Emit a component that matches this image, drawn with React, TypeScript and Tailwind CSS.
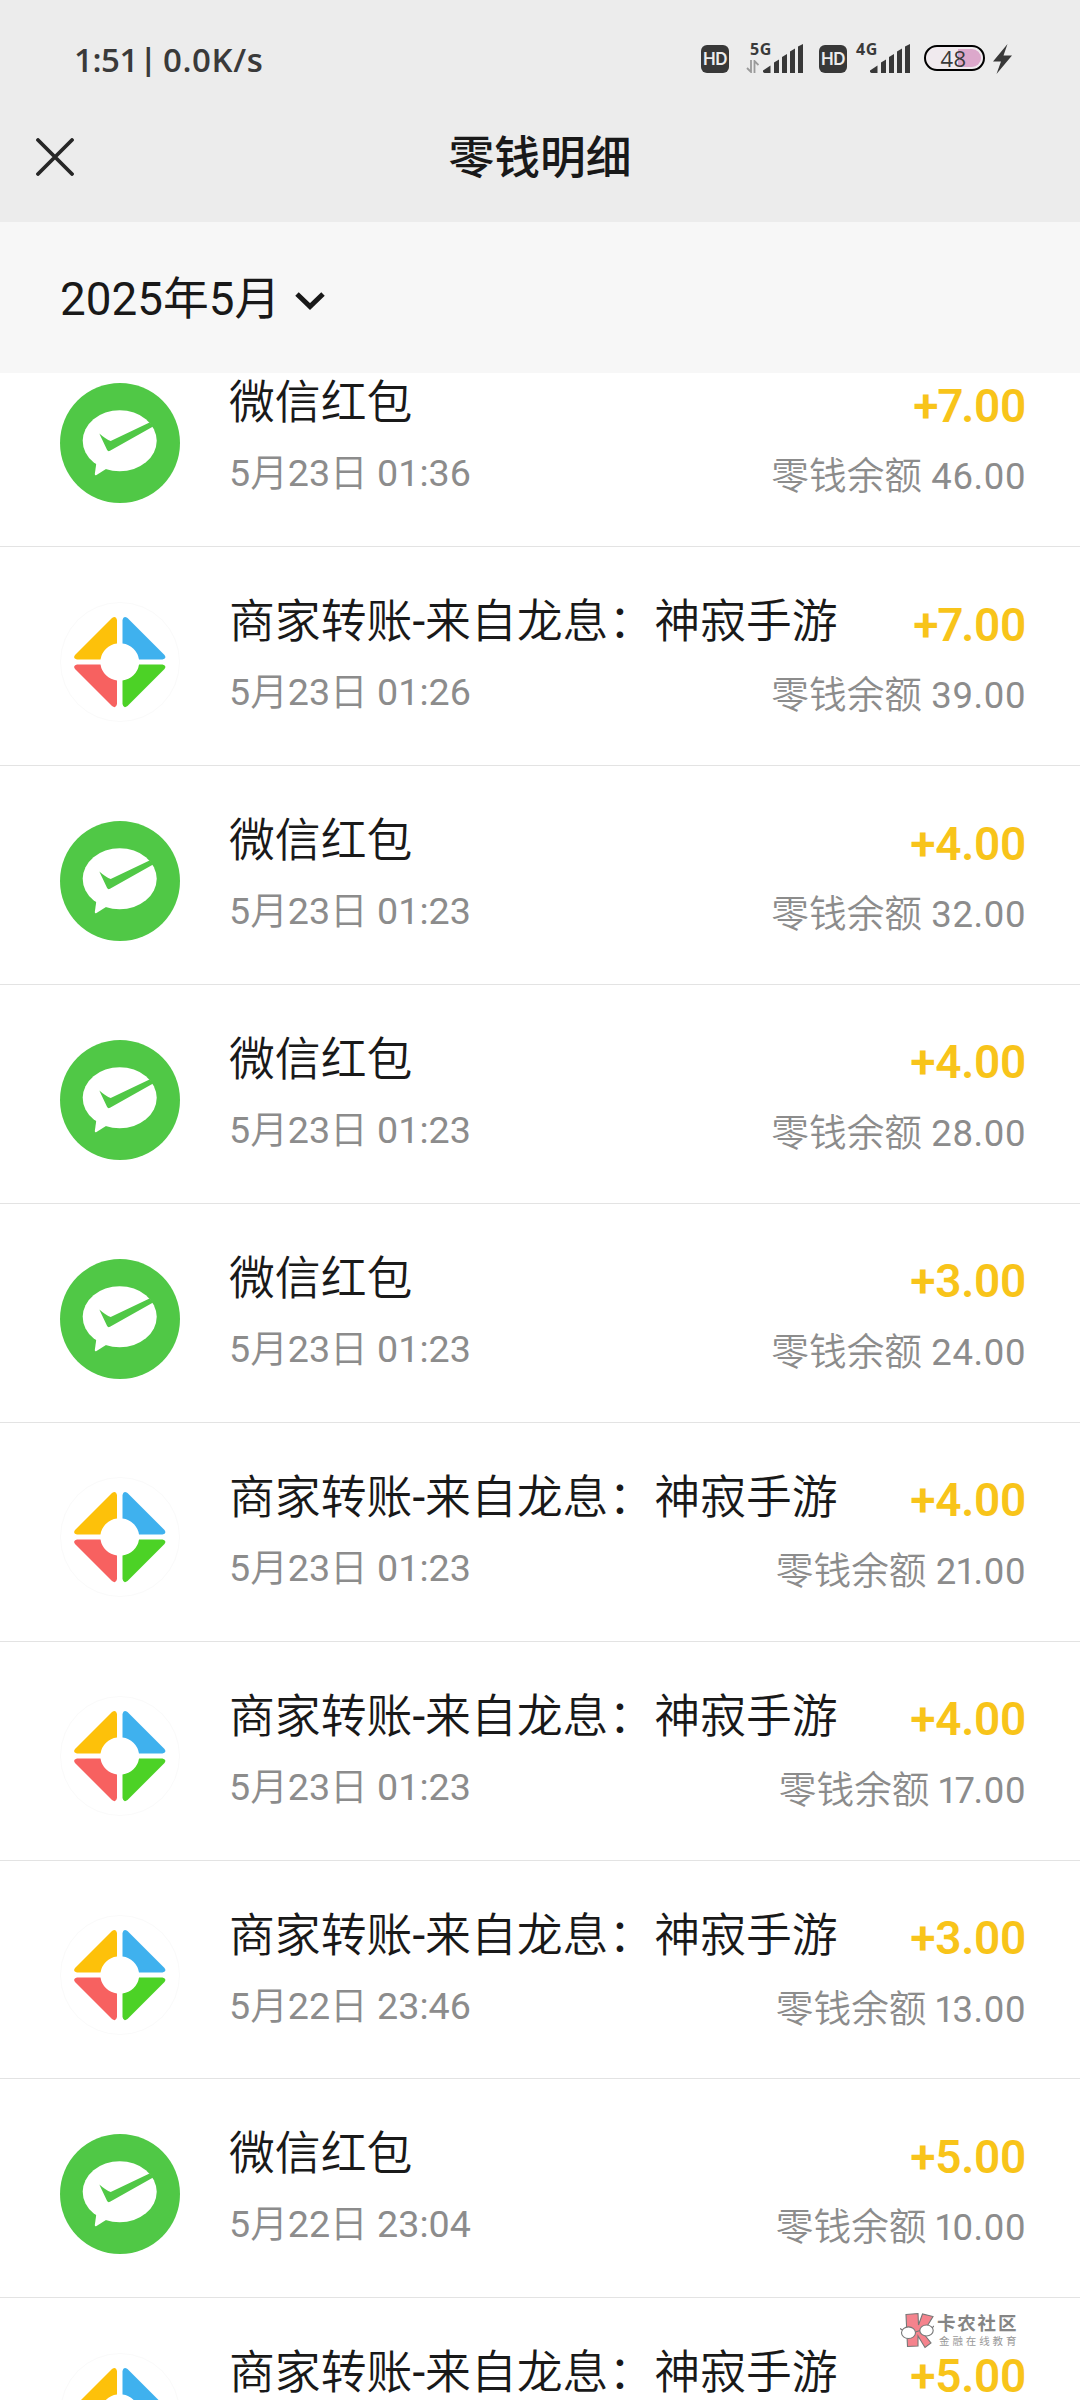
import React from 'react';
import clsx from 'clsx';

type Kind = 'packet' | 'merchant';

interface Transaction {
  kind: Kind;
  title: string;
  time: string;
  amount: string;
  balance: string;
}

const PACKET = '微信红包';
const MERCHANT = '商家转账-来自龙息：神寂手游';

const transactions: Transaction[] = [
  { kind: 'packet', title: PACKET, time: '5月23日 01:36', amount: '+7.00', balance: '46.00' },
  { kind: 'merchant', title: MERCHANT, time: '5月23日 01:26', amount: '+7.00', balance: '39.00' },
  { kind: 'packet', title: PACKET, time: '5月23日 01:23', amount: '+4.00', balance: '32.00' },
  { kind: 'packet', title: PACKET, time: '5月23日 01:23', amount: '+4.00', balance: '28.00' },
  { kind: 'packet', title: PACKET, time: '5月23日 01:23', amount: '+3.00', balance: '24.00' },
  { kind: 'merchant', title: MERCHANT, time: '5月23日 01:23', amount: '+4.00', balance: '21.00' },
  { kind: 'merchant', title: MERCHANT, time: '5月23日 01:23', amount: '+4.00', balance: '17.00' },
  { kind: 'merchant', title: MERCHANT, time: '5月22日 23:46', amount: '+3.00', balance: '13.00' },
  { kind: 'packet', title: PACKET, time: '5月22日 23:04', amount: '+5.00', balance: '10.00' },
];

const PacketIcon = () => (
  <svg viewBox="0 0 120 120" className="w-[120px] h-[120px]">
    <circle cx="60" cy="60" r="60" fill="#50c846" />
    <ellipse cx="59.700" cy="57.800" rx="37" ry="30.500" fill="#fff" />
    <path d="M36.500 79L34.800 91Q34.800 92.800 36.500 92L46 86L52 82Z" fill="#fff" />
    <path d="M39.300 50.600Q46 56.500 50.700 58L89.500 39.500L94 43L50 67.800Q48 68.800 47 66.800Z" fill="#50c846" />
  </svg>
);

const MerchantIcon = () => (
  <svg viewBox="0 0 120 120" className="w-[120px] h-[120px]">
    <circle cx="60" cy="60" r="59.500" fill="#fff" stroke="#fafafa" />
    <path d="M57 18V41.500A19 19 0 0 0 40.500 57.500H17Q12.500 56.500 15 53L52 16Q56 13 57 18Z" fill="#fdc10a" />
    <path d="M62.500 18V41.500A19 19 0 0 1 79 57.500H102.500Q107 56.500 104.500 53L67.500 16Q63.500 13 62.500 18Z" fill="#3fb1ee" />
    <path d="M57 102V78.500A19 19 0 0 1 40.500 62.500H17Q12.500 63.500 15 67L52 104Q56 107 57 102Z" fill="#f76160" />
    <path d="M62.500 102V78.500A19 19 0 0 0 79 62.500H102.500Q107 63.500 104.500 67L67.500 104Q63.500 107 62.500 102Z" fill="#4cd226" />
  </svg>
);

const HdBadge = () => (
  <div className="w-7 h-7 rounded-[6px] bg-[#383838] flex items-center justify-center font-[Inter] text-[17px] leading-7 tracking-[-0.500px] font-semibold text-[#ececec]">
    HD
  </div>
);

const SignalBars = ({ className }: { className: string }) => (
  <svg viewBox="0 0 40 29" className={className} fill="#383838">
    <path d="M0 26.500L7.500 21.500V29H1.500Q-.5 28.500 0 26.500Z" />
    <path d="M11 18.500L16 15.500V29H11Z" />
    <path d="M19 13L24 10V29H19Z" />
    <path d="M27 7.500L32 4.500V29H27Z" />
    <path d="M35 2.500L40 0V29H35Z" />
  </svg>
);

const StatusBar = () => (
  <div className="h-[100px] pt-[40px] pl-[74px] flex items-start text-[#3a3a3a] font-['Open_Sans']">
    <div className="w-[627px] flex text-[33px] leading-[40px] font-semibold">
      <span className="w-[66px] tracking-[-0.400px]">1:51</span>
      <span className="w-[23px] text-[30px] leading-[37px] font-bold">|</span>
      <span className="tracking-[0.600px]">0.0K/s</span>
    </div>
    <div className="pt-[5px] flex items-start">
      <HdBadge />
      <div className="ml-[17px] w-[57px] h-7 relative">
        <span className="absolute left-[4px] -top-[4px] text-[16px] leading-[16px] font-bold tracking-[0.600px]">5G</span>
        <svg viewBox="0 0 13 13" className="absolute left-0 top-[15px] w-[13px] h-[13px]" fill="none" stroke="#9a9a9a" strokeWidth="1.800">
          <path d="M5 0V12L1 8M8.500 13V1L12.500 5" />
        </svg>
        <SignalBars className="absolute right-0 -top-px w-[40px] h-[29px]" />
      </div>
      <div className="ml-[16px]">
        <HdBadge />
      </div>
      <div className="ml-[9px] w-[54px] h-7 relative">
        <span className="absolute left-0 -top-[4px] text-[16px] leading-[16px] font-bold tracking-[0.600px]">4G</span>
        <SignalBars className="absolute right-0 -top-px w-[40px] h-[29px]" />
      </div>
      <div className="relative ml-[14px] w-[61px] h-[26px] rounded-full border-[2.500px] border-black bg-[#f0eaee] flex items-center justify-center">
        <div className="absolute right-[2px] inset-y-[2px] w-[23px] rounded-r-full bg-[#dca8cb]" />
        <span className="relative pr-[2px] text-[22px] leading-[30px] font-medium tracking-[0.500px]">48</span>
      </div>
      <svg viewBox="0 0 19 30" className="ml-[8px] -mt-px w-[19px] h-[30px]" fill="#383838">
        <path d="M14.500 0L0 17.500H8L3.500 30L19 11.500H10.500Z" />
      </svg>
    </div>
  </div>
);

const NavBar = () => (
  <div className="h-[122px] flex items-start">
    <svg viewBox="0 0 38 38" className="mt-[37.500px] ml-[35.500px] w-[38px] h-[38px] shrink-0" fill="none" stroke="#262626" strokeWidth="3.800" strokeLinecap="round">
      <path d="M2 2L36 36M36 2L2 36" />
    </svg>
    <h1 className="mt-[31px] w-[933px] text-center text-[45.800px] leading-[56px] font-medium text-[#191919]">零钱明细</h1>
  </div>
);

const MonthPicker = () => (
  <div className="h-[151px] bg-[#f7f7f7] pt-[51px] pl-[60px] flex items-start text-[#191919]">
    <span className="text-[45.800px] leading-[54px]">2025年5月</span>
    <svg viewBox="0 0 30 20" className="mt-[18px] ml-[15px] w-[30px] h-[20px]" fill="none" stroke="#191919" strokeWidth="5">
      <path d="M2 3L15 15.500L28 3" />
    </svg>
  </div>
);

// Chinese characters are set a little lighter than latin ones
const Mixed = ({ text }: { text: string }) => (
  <>
    {text.split(/([\x20-\x7e]+)/).map((part, i) => (
      <span key={i} className={i % 2 ? 'font-normal' : 'font-[350]'}>
        {part}
      </span>
    ))}
  </>
);

// 1 and 7 are narrower than the other figures
const Figures = ({ value }: { value: string }) => (
  <>
    {value.split('').map((char, i) => (
      <span
        key={i}
        className={clsx(char === '1' && '-ml-[1.500px] -mr-[3px]', char === '7' && '-ml-px -mr-[2px]')}
      >
        {char}
      </span>
    ))}
  </>
);

const Row = ({ item }: { item: Transaction }) => (
  <li className="h-[218.900px] shrink-0 border-b border-[#e3e3e3] pl-[60px] pr-[54px] flex items-start">
    <div className="shrink-0 pt-[54.700px]">
      {item.kind === 'packet' ? <PacketIcon /> : <MerchantIcon />}
    </div>
    <div className="w-0 flex-1 ml-[49px] pt-[47px] whitespace-nowrap">
      <p className="text-[45.850px] leading-[54px] text-[#191919]">
        <Mixed text={item.title} />
      </p>
      <p className="mt-[22px] text-[37.650px] leading-[44px] text-[#8c8c8c]">
        <Mixed text={item.time} />
      </p>
    </div>
    <div className="shrink-0 pt-[50.500px] text-right whitespace-nowrap">
      <p className="text-[46px] leading-[54px] font-semibold tracking-[-0.300px] text-[#f8c41a]">
        <Figures value={item.amount} />
      </p>
      <p className="mt-[21.500px] text-[37.650px] leading-[44px] text-[#8c8c8c]">
        <Mixed text="零钱余额 " />
        <span className="text-[36.500px] tracking-[0.600px]">
          <Figures value={item.balance} />
        </span>
      </p>
    </div>
  </li>
);

// last visible row, only its first line fits on the screen
const CutRow = () => (
  <li className="h-[102px] shrink-0 overflow-hidden pl-[60px] pr-[54px] flex items-start">
    <div className="shrink-0 pt-[54.700px]">
      <MerchantIcon />
    </div>
    <p className="w-0 flex-1 ml-[49px] mt-[47px] whitespace-nowrap text-[45.850px] leading-[54px] text-[#191919]">
      <Mixed text={MERCHANT} />
    </p>
    <p className="shrink-0 mt-[50.500px] text-[46px] leading-[54px] font-semibold tracking-[-0.300px] text-[#f8c41a]">+5.00</p>
  </li>
);

const Watermark = () => (
  <div className="absolute left-[900px] top-[2312px] flex items-start text-[#858585]">
    <svg viewBox="0 0 34 37" className="w-[34px] h-[37px]" stroke="#777" strokeWidth="1.100">
      <path d="M6 2.500L18 1.500L18.500 13L22.500 2L33 4.500L26 16L23 21L31 31L25 35.500L18 24V34L7.500 34.500Z" fill="#f5838d" />
      <ellipse cx="8.500" cy="20.700" rx="7" ry="5.800" fill="#fff" />
      <ellipse cx="26.500" cy="18.500" rx="6.700" ry="5.500" fill="#fff" />
      <path d="M0 16.500L2.500 18M15.500 20L20 18.500M32 16L34 14" fill="none" />
    </svg>
    <div className="ml-[3px] pt-px">
      <p className="text-[18.500px] leading-[23px] font-bold tracking-[1.800px]">卡农社区</p>
      <p className="ml-[2px] text-[10.500px] leading-[12px] tracking-[2.900px] text-[#999]">金融在线教育</p>
    </div>
  </div>
);

export default function App() {
  return (
    <div className="relative w-[1080px] h-[2400px] overflow-hidden bg-white flex flex-col font-[Roboto,'Noto_Sans_CJK_SC',sans-serif]">
      <header className="bg-[#ececec] shrink-0">
        <StatusBar />
        <NavBar />
      </header>
      <div className="shrink-0 relative z-10">
        <MonthPicker />
      </div>
      {/* the list is scrolled a little, its first row sits partly under the month bar */}
      <ul className="-mt-[44.700px] flex flex-col">
        {transactions.map((item, i) => (
          <Row key={i} item={item} />
        ))}
        <CutRow />
      </ul>
      <Watermark />
    </div>
  );
}
